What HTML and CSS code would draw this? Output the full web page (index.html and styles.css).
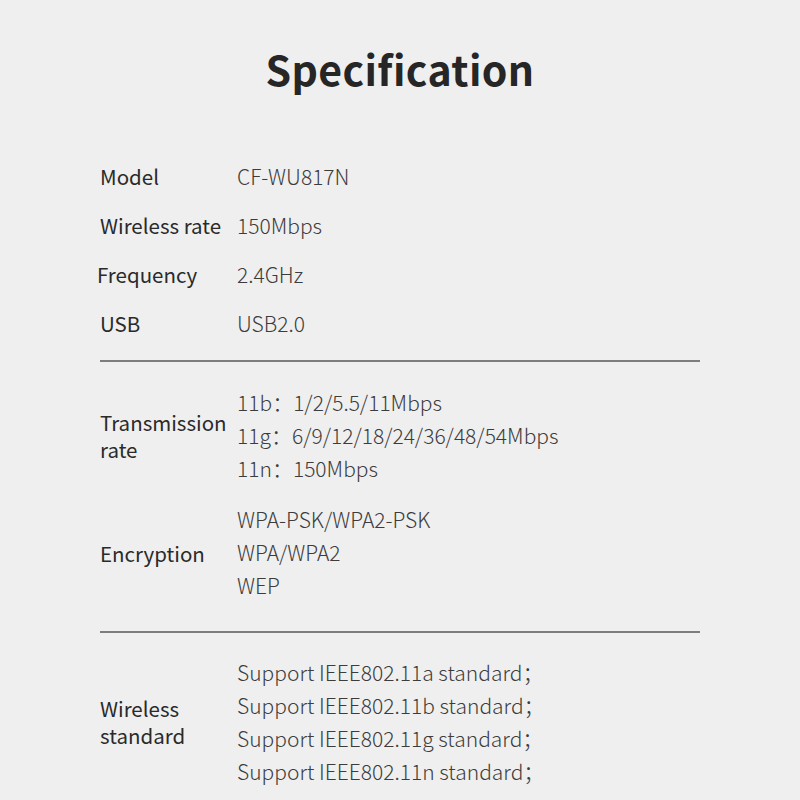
FILE: index.html
```html
<!DOCTYPE html>
<html>
<head>
<meta charset="utf-8">
<link rel="stylesheet" href="styles.css">
</head>
<body>
<div class="page">
  <h1 class="title">Specification</h1>
  <div class="basic">
    <div class="row"><div class="label">Model</div><div class="value">CF-WU817N</div></div>
    <div class="row"><div class="label">Wireless rate</div><div class="value">150Mbps</div></div>
    <div class="row"><div class="label label-freq">Frequency</div><div class="value">2.4GHz</div></div>
    <div class="row"><div class="label">USB</div><div class="value">USB2.0</div></div>
  </div>
  <div class="divider div1"></div>
  <div class="group g-trans">
    <div class="label ml ml-trans"><div>Transmission</div><div>rate</div></div>
    <div class="values">
      <div>11b：1/2/5.5/11Mbps</div>
      <div>11g：6/9/12/18/24/36/48/54Mbps</div>
      <div>11n：150Mbps</div>
    </div>
  </div>
  <div class="group g-enc">
    <div class="label">Encryption</div>
    <div class="values">
      <div>WPA-PSK/WPA2-PSK</div>
      <div>WPA/WPA2</div>
      <div>WEP</div>
    </div>
  </div>
  <div class="divider div2"></div>
  <div class="group g-std">
    <div class="label ml ml-std"><div>Wireless</div><div>standard</div></div>
    <div class="values">
      <div>Support IEEE802.11a standard；</div>
      <div>Support IEEE802.11b standard；</div>
      <div>Support IEEE802.11g standard；</div>
      <div>Support IEEE802.11n standard；</div>
    </div>
  </div>
</div>
</body>
</html>
```
FILE: styles.css
```css
html, body {
  margin: 0;
  padding: 0;
  background: #efefef;
}
body {
  font-family: "Noto Sans CJK SC", "Noto Sans", sans-serif;
  color: #2b2b2b;
}
.page {
  width: 800px;
  height: 800px;
  overflow: hidden;
}
.title {
  margin: 0;
  padding-top: 38px;
  height: 60px;
  line-height: 60px;
  font-size: 41px;
  font-weight: 700;
  text-align: center;
  color: #262626;
  letter-spacing: 0.4px;
}
.basic {
  margin: 53px 100px 0 100px;
}
.row {
  display: flex;
  align-items: center;
  height: 49px;
}
.label {
  width: 137px;
  flex: none;
  font-size: 20.5px;
  font-weight: 400;
  color: #2a2a2a;
}
.label-freq {
  margin-left: -3px;
  width: 140px;
}
.ml-trans div {
  height: 27px;
  line-height: 27px;
}
.ml-std div {
  height: 27px;
  line-height: 27px;
}
.value, .values {
  font-size: 21px;
  font-weight: 300;
  color: #3c3c3c;
}
.values div {
  height: 33px;
  line-height: 33px;
}
.divider {
  margin: 0 100px;
  height: 2px;
  background: #7d7d7d;
}
.div1 {
  margin-top: 13px;
}
.group {
  display: flex;
  align-items: center;
  margin: 0 100px;
}
.g-trans {
  margin-top: 24px;
}
.g-enc {
  margin-top: 18px;
}
.div2 {
  margin-top: 29px;
}
.g-std {
  margin-top: 23px;
}
```
